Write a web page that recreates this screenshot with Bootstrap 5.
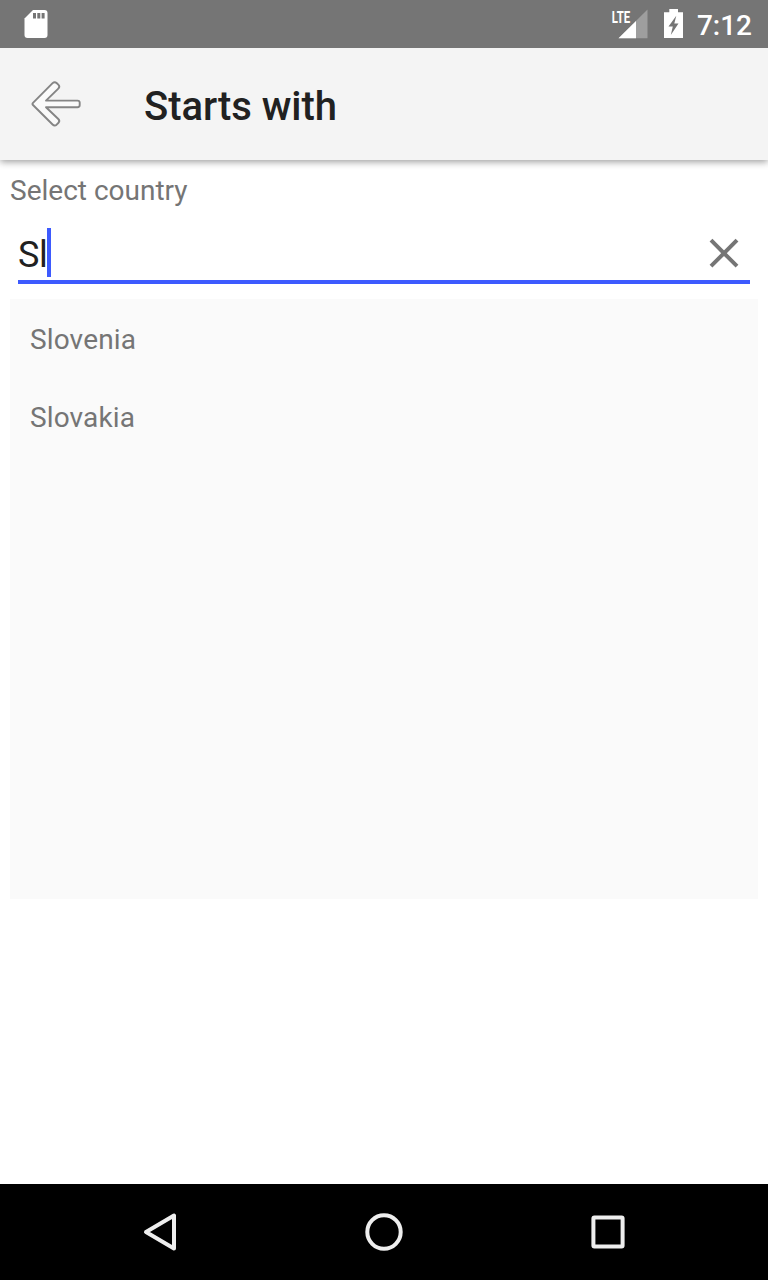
<!DOCTYPE html>
<html lang="en">
<head>
<meta charset="utf-8">
<meta name="viewport" content="width=device-width, initial-scale=1">
<title>Starts with</title>
<link href="https://cdn.jsdelivr.net/npm/bootstrap@5.3.0/dist/css/bootstrap.min.css" rel="stylesheet">
<style>
  body { font-family: Roboto, "Liberation Sans", sans-serif; font-size: 28px; line-height: 33px; color: #757575; background: #fff; }
  svg { display: block; flex: none; }
  .screen { height: 1280px; overflow: hidden; }
  .status-bar { height: 48px; background: #757575; color: #fff; padding: 0 16px 0 20px; z-index: 2; }
  .clock { font-weight: 500; margin-left: 9px; padding-top: 2px; }
  .app-bar { height: 112px; background: #f4f4f4; box-shadow: 0 2px 7px rgba(0,0,0,.38); padding-left: 28px; z-index: 1; }
  .app-title { font-size: 40px; font-weight: 500; line-height: 48px; letter-spacing: -.05px; color: #212121; margin: 6px 0 0 60px; }
  .picker { padding: 14px 10px 0; }
  .entry { height: 60px; margin: 17px 8px 0; padding-bottom: 3px; border-bottom: 4px solid #3d5afe; }
  .entry-text { font-size: 36px; line-height: 49px; height: 49px; padding-top: 3px; letter-spacing: -.5px; color: #212121; }
  .caret { width: 4px; height: 49px; background: #3d5afe; }
  .suggestions { height: 600px; margin-top: 15px; background: #fafafa; }
  .suggestions .list-group-item { height: 78px; padding: 2px 20px 0; background: transparent; color: #757575; border: 0; letter-spacing: .14px; }
  .nav-keys { height: 96px; background: #000; padding: 0 48px; }
</style>
</head>
<body>
<div class="screen d-flex flex-column">
  <header class="status-bar position-relative d-flex align-items-center justify-content-between">
    <svg width="32" height="48" viewBox="20 0 32 48" aria-label="Storage card">
      <path fill="#fff" d="M33 10h11.500a3 3 0 0 1 3 3v22a3 3 0 0 1-3 3h-17a3 3 0 0 1-3-3V18.500z"/>
      <path fill="#757575" d="M33 13h3v5.500h-3zM37.300 13h3v5.500h-3zM41.600 13h3v5.500h-3z"/>
    </svg>
    <div class="d-flex align-items-center">
      <svg width="78" height="48" viewBox="610 0 78 48" aria-label="Signal and battery">
        <path fill="#fff" fill-opacity=".3" d="M647.500 9.500v28.800h-29z"/>
        <path fill="#fff" d="M636 21v17.300h-17.500z"/>
        <text x="611.800" y="22.600" font-size="17" font-weight="700" fill="#fff" textLength="18.400" lengthAdjust="spacingAndGlyphs">LTE</text>
        <path fill="#fff" d="M669.300 9h8.700v3.200h5V38h-19V12.200h5.300z"/>
        <path fill="#757575" d="M676.300 15.800l-7.800 10.800h4.300l-2 8.400 7.700-11.500h-4.200z"/>
      </svg>
      <span class="clock">7:12</span>
    </div>
  </header>

  <nav class="app-bar d-flex align-items-center position-relative">
    <svg width="56" height="56" viewBox="28 76 56 56" aria-label="Back">
      <path fill="#fafafa" stroke="#858585" stroke-width="1.900" stroke-linejoin="round" d="M33 102.800 52.600 83.200Q54.600 81.200 56.600 83L58.300 84.700Q60.300 86.700 58.300 88.700L46 100.600H77.500Q79.700 100.600 79.700 102.600V105Q79.700 107.200 77.500 107.200H46L58.300 119Q60.300 121 58.300 123L56.600 124.700Q54.600 126.500 52.600 124.500L33 105Q31.900 103.900 33 102.800z"/>
    </svg>
    <h1 class="app-title">Starts with</h1>
  </nav>

  <main class="picker flex-grow-1">
    <div>Select country</div>
    <div class="entry d-flex align-items-end justify-content-between" role="textbox" aria-label="Country">
      <div class="d-flex">
        <span class="entry-text">Sl</span><span class="caret"></span>
      </div>
      <svg width="52" height="49" viewBox="698 228 52 49" aria-label="Clear">
        <path stroke="#757575" stroke-width="4" d="M711 240.200l26 26M737 240.200l-26 26"/>
      </svg>
    </div>
    <ul class="list-group rounded-0 suggestions">
      <li class="list-group-item d-flex align-items-center">Slovenia</li>
      <li class="list-group-item d-flex align-items-center">Slovakia</li>
    </ul>
  </main>

  <footer class="nav-keys d-flex align-items-center">
    <div class="col d-flex justify-content-center">
      <svg width="48" height="48" viewBox="136 1208 48 48" aria-label="Back key"><path fill="none" stroke="#eee" stroke-width="4" stroke-linejoin="round" d="M174 1215.500v33L146 1232z"/></svg>
    </div>
    <div class="col d-flex justify-content-center">
      <svg width="48" height="48" viewBox="360 1208 48 48" aria-label="Home key"><circle cx="384" cy="1232" r="16.700" fill="none" stroke="#eee" stroke-width="4"/></svg>
    </div>
    <div class="col d-flex justify-content-center">
      <svg width="48" height="48" viewBox="584 1208 48 48" aria-label="Recent apps key"><rect x="593.400" y="1217.400" width="29.200" height="29.200" rx="1" fill="none" stroke="#eee" stroke-width="4"/></svg>
    </div>
  </footer>
</div>
<script src="https://cdn.jsdelivr.net/npm/bootstrap@5.3.0/dist/js/bootstrap.bundle.min.js"></script>
</body>
</html>
